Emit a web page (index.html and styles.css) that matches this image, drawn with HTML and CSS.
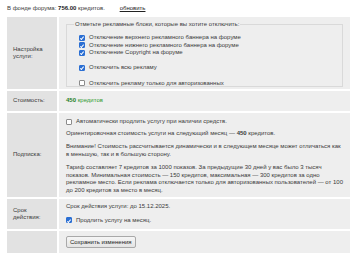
FILE: index.html
```html
<!DOCTYPE html>
<html lang="ru">
<head>
<meta charset="utf-8">
<link rel="stylesheet" href="styles.css">
</head>
<body>
<div class="fund">В фонде форума: <b>756.00</b> кредитов. <a class="refresh" href="#">обновить</a></div>
<div class="grid">
  <div class="label">Настройка услуги:</div>
  <div class="value v-ads">
    <fieldset class="blocks">
      <legend>Отметьте рекламные блоки, которые вы хотите отключить:</legend>
      <div class="group">
        <label class="check"><input type="checkbox" checked>Отключение верхнего рекламного баннера на форуме</label>
        <label class="check"><input type="checkbox" checked>Отключение нижнего рекламного баннера на форуме</label>
        <label class="check"><input type="checkbox" checked>Отключение Copyright на форуме</label>
      </div>
      <div class="group">
        <label class="check"><input type="checkbox" checked>Отключить всю рекламу</label>
      </div>
      <div class="group">
        <label class="check"><input type="checkbox">Отключить рекламу только для авторизованных</label>
      </div>
    </fieldset>
  </div>

  <div class="label">Стоимость:</div>
  <div class="value v-cost"><span class="price"><b>450</b> кредитов</span></div>

  <div class="label">Подписка:</div>
  <div class="value v-sub">
    <label class="check"><input type="checkbox">Автоматически продлить услугу при наличии средств.</label>
    <p>Ориентировочная стоимость услуги на следующий месяц — <b>450</b> кредитов.</p>
    <p>Внимание! Стоимость рассчитывается динамически и в следующем месяце может отличаться как в меньшую, так и в большую сторону.</p>
    <p>Тариф составляет 7 кредитов за 1000 показов. За предыдущие 30 дней у вас было 3 тысяч показов. Минимальная стоимость — 150 кредитов, максимальная — 300 кредитов за одно рекламное место. Если реклама отключается только для авторизованных пользователей — от 100 до 200 кредитов за место в месяц.</p>
  </div>

  <div class="label">Срок действия:</div>
  <div class="value v-term">
    <p>Срок действия услуги: до 15.12.2025.</p>
    <label class="check"><input type="checkbox" checked>Продлить услугу на месяц.</label>
  </div>

  <div class="label"></div>
  <div class="value v-save"><button class="save" type="button">Сохранить изменения</button></div>
</div>
</body>
</html>
```

FILE: styles.css
```css
html, body {
  margin: 0;
  padding: 0;
  background: #ffffff;
}
body {
  padding: 5px 10px 0 7px;
  font-family: "Liberation Sans", Arial, sans-serif;
  font-size: 6px;
  line-height: 7.5px;
  color: #3a3a3a;
}
.fund {
  height: 8px;
  margin-bottom: 4px;
}
.fund b {
  color: #222;
}
.refresh {
  color: #222;
  text-decoration: underline;
  margin-left: 13px;
}
.grid {
  display: grid;
  grid-template-columns: 50px 1fr;
  gap: 2px;
  width: 343px;
}
.label {
  background: #e2e2e2;
  padding: 0 6px;
  display: flex;
  align-items: center;
}
.value {
  background: #eeeeee;
  padding: 0 7px;
}
.v-ads {
  padding-top: 4px;
  padding-bottom: 2px;
  height: 66px;
}
.blocks {
  margin: 0;
  border: 1px solid #d9d9d9;
  padding: 6px 0 0 12px;
  height: 66px;
  box-sizing: border-box;
}
.blocks legend {
  padding: 0 1px;
  margin-left: -5px;
}
.group {
  display: flex;
  flex-direction: column;
  margin-bottom: 8px;
}
.check {
  display: flex;
  align-items: center;
  gap: 4px;
  height: 7.3px;
}
.check input {
  appearance: none;
  -webkit-appearance: none;
  margin: 0;
  width: 6px;
  height: 6px;
  box-sizing: border-box;
  border: 1px solid #8c8c8c;
  background: #ffffff;
  border-radius: 1px;
  flex: none;
  position: relative;
}
.check input:checked {
  background: #2b6fd3;
  border-color: #2b6fd3;
}
.check input:checked::after {
  content: "";
  position: absolute;
  left: 1.2px;
  top: 0.2px;
  width: 1.4px;
  height: 2.8px;
  border: solid #ffffff;
  border-width: 0 1px 1px 0;
  transform: rotate(40deg);
}
.v-cost {
  height: 20px;
  display: flex;
  align-items: center;
}
.price {
  color: #2f9a2f;
}
.price b {
  color: #1f7f1f;
}
.v-sub {
  padding-top: 5px;
  padding-bottom: 3px;
}
.v-sub p, .v-term p {
  margin: 4.5px 0 0;
}
.v-sub p + p {
  margin-top: 6px;
}
.v-term {
  padding-top: 4px;
  height: 26px;
}
.v-term p {
  margin: 0 0 6px;
}
.v-save {
  height: 22px;
  display: flex;
  align-items: center;
}
.save {
  font-family: inherit;
  font-size: 6px;
  line-height: 8px;
  color: #222;
  background: linear-gradient(#f6f6f6, #e4e4e4);
  border: 1px solid #a9a9a9;
  border-radius: 2px;
  padding: 1px 3px;
  height: 12px;
}
```
